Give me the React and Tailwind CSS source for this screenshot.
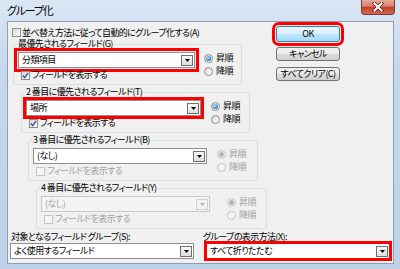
import React from "react";

const FONT = "font-['Noto_Sans_CJK_JP','Noto_Sans',sans-serif] [font-feature-settings:'palt']";

function Check({ checked, disabled }) {
  return (
    <span
      className={
        disabled
          ? "w-[9px] h-[9px] shrink-0 border border-[#c4c4c4] bg-[#f5f5f5]"
          : "w-[9px] h-[9px] shrink-0 border border-[#8e8f8f] bg-[linear-gradient(135deg,#d6d6d6,#ffffff)] flex items-center justify-center"
      }
    >
      {checked && (
        <svg width="7" height="7" viewBox="0 0 7 7">
          <path d="M0.8 3.6 L2.7 5.6 L6.2 0.9" fill="none" stroke="#3b5ca8" strokeWidth="1.5" />
        </svg>
      )}
    </span>
  );
}

function Radio({ selected, disabled, label }) {
  return (
    <div className="h-[12px] flex items-center gap-[3px]">
      <span
        className={
          disabled
            ? "w-[9px] h-[9px] rounded-full border border-[#c2c2c2] bg-[#f4f4f4] flex items-center justify-center"
            : "w-[9px] h-[9px] rounded-full border border-[#8e8f8f] bg-[linear-gradient(135deg,#d6d6d6,#ffffff)] flex items-center justify-center"
        }
      >
        {selected &&
          (disabled ? (
            <span className="w-[5px] h-[5px] rounded-full bg-[#b4b4b4]" />
          ) : (
            <span className="w-[5px] h-[5px] rounded-full bg-[radial-gradient(circle_at_40%_35%,#b8e4fb,#1c6fbd_75%)]" />
          ))}
      </span>
      <span className={disabled ? "text-[#a2a2a2] leading-[12px]" : "text-black leading-[12px]"}>{label}</span>
    </div>
  );
}

function Arrow({ color }) {
  return (
    <svg width="5" height="3" viewBox="0 0 5 3">
      <path d="M0 0 L5 0 L2.5 3 Z" fill={color} />
    </svg>
  );
}

function Combo({ text, disabled, className }) {
  return (
    <div
      className={
        (disabled
          ? "h-[16px] bg-[#f4f4f4] border border-[#c5c8cc] text-[#a2a2a2] "
          : "h-[16px] bg-white border border-[#8c9096] text-black ") +
        "flex items-center " +
        className
      }
    >
      <span className="flex-1 pl-[3px] leading-[12px] whitespace-nowrap">{text}</span>
      <span
        className={
          disabled
            ? "w-[12px] h-[11px] mr-[1px] border border-[#cfd1d3] bg-[#f4f4f4] flex items-center justify-center"
            : "w-[12px] h-[11px] mr-[1px] border border-[#707070] bg-[linear-gradient(#f7f7f7,#dedede)] flex items-center justify-center"
        }
      >
        <Arrow color={disabled ? "#b0b0b0" : "#000"} />
      </span>
    </div>
  );
}

function Group({ label, className, children }) {
  return (
    <fieldset className={"border border-[#d5dfe5] rounded-[3px] pl-[4px] pr-[4px] pb-[4px] " + className}>
      <legend className="-ml-[1px] px-[1px] leading-[12px] whitespace-nowrap">{label}</legend>
      {children}
    </fieldset>
  );
}

function GroupBody({ combo, comboW, comboDisabled, checked, optDisabled, radioGap, outline }) {
  return (
    <div className="flex">
      <div className="flex flex-col">
        <Combo
          text={combo}
          disabled={comboDisabled}
          className={"mt-[2px] " + comboW + " " + outline}
        />
        <div className="mt-[2px] h-[10px] ml-[3px] flex items-center gap-[2px]">
          <Check checked={checked} disabled={optDisabled} />
          <span className={optDisabled ? "text-[#a2a2a2] leading-[12px]" : "leading-[12px]"}>フィールドを表示する</span>
        </div>
      </div>
      <div className={"mt-[2px] flex flex-col gap-[1px] " + radioGap}>
        <Radio selected disabled={optDisabled} label="昇順" />
        <Radio disabled={optDisabled} label="降順" />
      </div>
    </div>
  );
}

function Button({ children, primary, className }) {
  return (
    <div
      className={
        (primary
          ? "border border-[#3c7fb1] bg-[linear-gradient(#eaf6fd,#d9f0fc_50%,#bee6fd_50%,#a7d9f5)] "
          : "border border-[#707070] bg-[linear-gradient(#f2f2f2,#ebebeb_50%,#dddddd_50%,#cfcfcf)] ") +
        "w-[64px] rounded-[3px] flex items-center justify-center leading-[12px] text-black whitespace-nowrap " +
        className
      }
    >
      {children}
    </div>
  );
}

export default function App() {
  return (
    <div className={"w-[400px] h-[269px] overflow-hidden bg-[linear-gradient(#dae6f4,#c6d8ed_25%,#bdd1e9)] text-[9px] tracking-[-0.6px] " + FONT}>
      {/* title bar */}
      <div className="h-[21px] flex items-start">
        <span className="ml-[7px] mt-[3px] text-[11px] leading-[14px] tracking-[-1.2px] text-black">グループ化</span>
        <div className="ml-auto mr-[5px] w-[34px] h-[15px] rounded-b-[4px] border border-t-0 border-[#6f3a36] bg-[linear-gradient(#e9a89b,#d8806e_45%,#c23f2a_50%,#d9664d)] flex items-center justify-center">
          <svg width="12" height="10" viewBox="0 0 12 10">
            <path d="M2.5 1.5 L9.5 8.5 M9.5 1.5 L2.5 8.5" stroke="#5a1f1a" strokeWidth="3.6" strokeLinecap="square" />
            <path d="M2.5 1.5 L9.5 8.5 M9.5 1.5 L2.5 8.5" stroke="#ffffff" strokeWidth="2" strokeLinecap="square" />
          </svg>
        </div>
      </div>

      {/* client area */}
      <div className="ml-[7px] w-[387px] h-[243px] bg-[#f0f0f0] border border-[#8d9fb5] pl-[2px] pt-[5px] flex flex-col">
        <div className="flex">
          {/* left column */}
          <div className="w-[258px] flex flex-col">
            <div className="h-[11px] ml-[2px] flex items-center gap-[1px]">
              <Check />
              <span className="leading-[12px] whitespace-nowrap">並べ替え方法に従って自動的にグループ化する(A)</span>
            </div>

            <Group label="最優先されるフィールド(G)" className="ml-[3px] w-[229px]">
              <GroupBody
                combo="分類項目"
                comboW="w-[177px]"
                checked
                radioGap="ml-[9px]"
                outline="outline-[3px] outline-solid outline-[#ff0000] outline-offset-[1px]"
              />
            </Group>

            <Group label="2 番目に優先されるフィールド(T)" className="mt-[1px] ml-[11px] w-[229px]">
              <GroupBody
                combo="場所"
                comboW="w-[175px]"
                checked
                radioGap="ml-[10px]"
                outline="outline-[3px] outline-solid outline-[#ff0000] outline-offset-0"
              />
            </Group>

            <Group label="3 番目に優先されるフィールド(B)" className="mt-[1px] ml-[18px] w-[230px]">
              <GroupBody combo="(なし)" comboW="w-[174px]" optDisabled radioGap="ml-[10px]" outline="" />
            </Group>

            <Group label="4 番目に優先されるフィールド(Y)" className="mt-[1px] ml-[26px] w-[231px]">
              <GroupBody combo="(なし)" comboW="w-[169px]" comboDisabled optDisabled radioGap="ml-[17px]" outline="" />
            </Group>
          </div>

          {/* buttons */}
          <div className="ml-[8px] -mt-[1px] flex flex-col">
            <Button primary className="h-[16px] outline-[3px] outline-solid outline-[#ff0000] outline-offset-[1px]">OK</Button>
            <Button className="mt-[5px] h-[14px]">キャンセル</Button>
            <Button className="mt-[6px] h-[14px]">すべてクリア(C)</Button>
          </div>
        </div>

        {/* bottom row */}
        <div className="mt-[2px] flex">
          <div className="w-[184px] flex flex-col">
            <span className="ml-[1px] h-[12px] leading-[12px] whitespace-nowrap">対象となるフィールド グループ(S):</span>
            <Combo text="よく使用するフィールド" className="w-[184px]" />
          </div>
          <div className="ml-[9px] flex flex-col">
            <span className="h-[12px] leading-[12px] whitespace-nowrap">グループの表示方法(X):</span>
            <Combo
              text="すべて折りたたむ"
              className="ml-[3px] w-[184px] outline-[3px] outline-solid outline-[#ff0000] outline-offset-[-1px]"
            />
          </div>
        </div>
      </div>
    </div>
  );
}
